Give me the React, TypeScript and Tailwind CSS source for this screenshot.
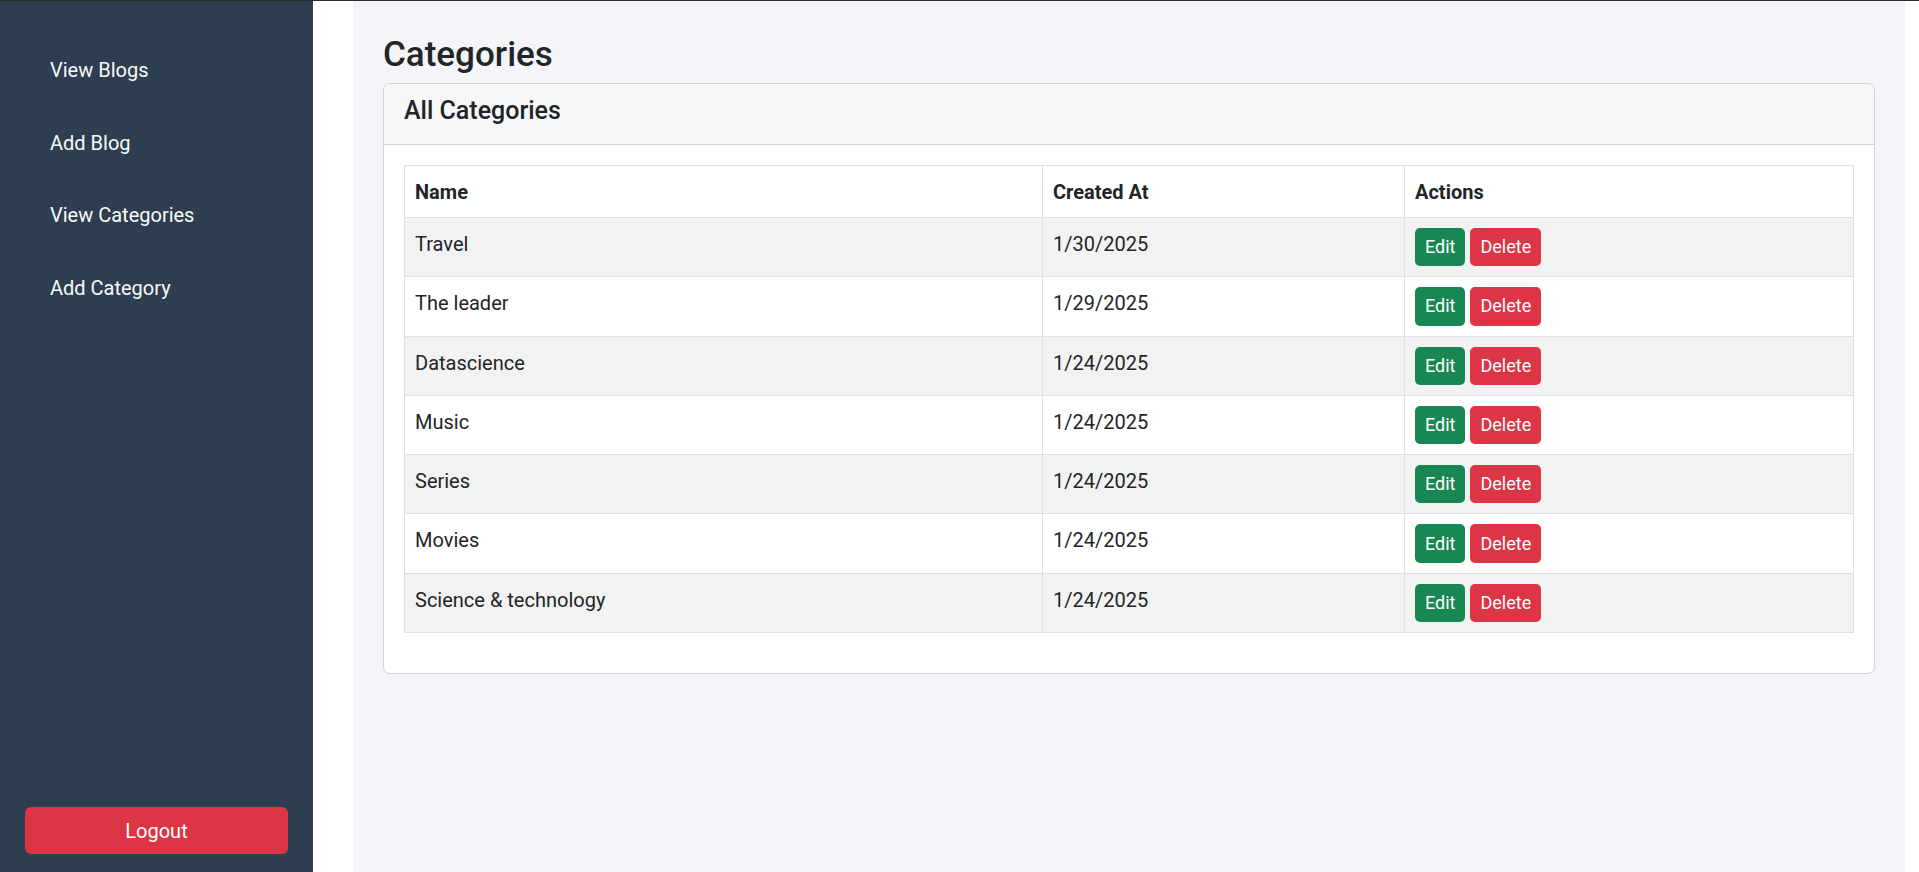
import React from "react";

const rows = [
  { name: "Travel", date: "1/30/2025" },
  { name: "The leader", date: "1/29/2025" },
  { name: "Datascience", date: "1/24/2025" },
  { name: "Music", date: "1/24/2025" },
  { name: "Series", date: "1/24/2025" },
  { name: "Movies", date: "1/24/2025" },
  { name: "Science & technology", date: "1/24/2025" },
];

const nav = ["View Blogs", "Add Blog", "View Categories", "Add Category"];

export default function App() {
  return (
    <div
      className="flex h-[872px] w-full overflow-hidden border-t border-[#2b2b2b] bg-white text-[#212529]"
      style={{ fontFamily: "Roboto, 'Open Sans', sans-serif" }}
    >
      <aside className="flex w-[313px] shrink-0 flex-col justify-between bg-[#2d3e50] px-[25px] pb-[18px] pt-[33px]">
        <nav className="flex flex-col">
          {nav.map((n) => (
            <a
              key={n}
              className="block cursor-pointer px-[25px] py-[21.3px] text-[20px] leading-[30px] text-[#f8f9fa]"
            >
              {n}
            </a>
          ))}
        </nav>
        <button className="h-[47px] w-full rounded-[6px] bg-[#dc3545] text-[20px] leading-[30px] text-white">
          Logout
        </button>
      </aside>
      <div className="flex flex-1 bg-white pl-[40px] pr-[14px]">
        <main className="flex-1 bg-[#f4f5f9] px-[30px] pt-[33px]">
          <h2 className="mb-[7px] text-[35px] font-medium leading-[42px] text-[#212529]">
            Categories
          </h2>
          <div className="rounded-[7px] border border-[#d3d3d3] bg-white">
            <div className="rounded-t-[7px] border-b border-[#d3d3d3] bg-[#f7f7f7] px-[20px] pb-[18px] pt-[12px]">
              <h5 className="text-[25px] font-medium leading-[30px]">All Categories</h5>
            </div>
            <div className="p-[20px]">
              <table className="mb-[20px] w-full table-fixed border-collapse text-[20px] leading-[30px]">
                <colgroup>
                  <col className="w-[638px]" />
                  <col className="w-[362px]" />
                  <col />
                </colgroup>
                <thead>
                  <tr className="bg-white">
                    <th className="border border-[#dee2e6] px-[10px] pb-[10px] pt-[11px] text-left font-bold">Name</th>
                    <th className="border border-[#dee2e6] px-[10px] pb-[10px] pt-[11px] text-left font-bold">Created At</th>
                    <th className="border border-[#dee2e6] px-[10px] pb-[10px] pt-[11px] text-left font-bold">Actions</th>
                  </tr>
                </thead>
                <tbody>
                  {rows.map((r, i) => (
                    <tr key={r.name} className={i % 2 === 0 ? "bg-[#f2f2f2]" : "bg-white"}>
                      <td className="border border-[#dee2e6] px-[10px] pb-[10px] pt-[11px] align-top">{r.name}</td>
                      <td className="border border-[#dee2e6] px-[10px] pb-[10px] pt-[11px] align-top">{r.date}</td>
                      <td className="border border-[#dee2e6] p-[10px] align-top">
                        <div className="flex gap-[5px]">
                          <button className="h-[38.3px] rounded-[5px] bg-[#198754] px-[10px] text-[18px] leading-[26px] text-white">
                            Edit
                          </button>
                          <button className="h-[38.3px] rounded-[5px] bg-[#dc3545] px-[10px] text-[18px] leading-[26px] text-white">
                            Delete
                          </button>
                        </div>
                      </td>
                    </tr>
                  ))}
                </tbody>
              </table>
            </div>
          </div>
        </main>
      </div>
    </div>
  );
}
